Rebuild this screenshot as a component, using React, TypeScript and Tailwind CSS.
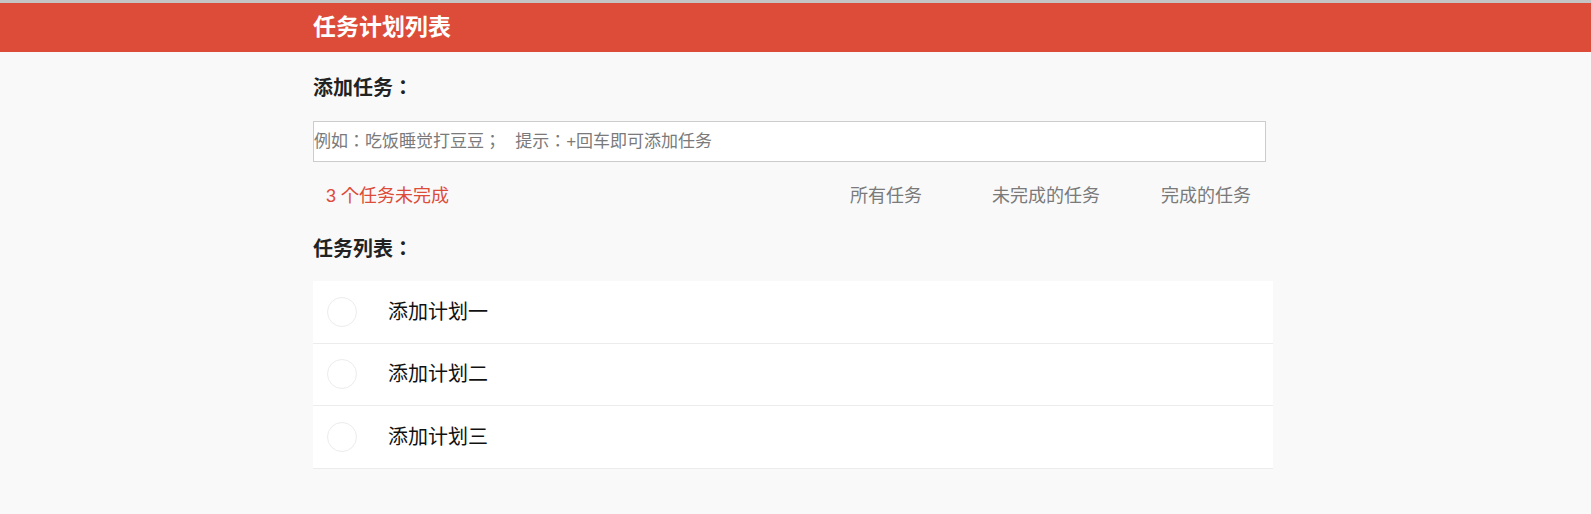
import React from "react";

const tasks = ["添加计划一", "添加计划二", "添加计划三"];

export default function App() {
  return (
    <div className="min-h-screen w-full bg-[#f9f9f9] font-['Liberation_Sans','Noto_Sans_CJK_JP',sans-serif] text-[#222]">
      <div className="border-t-[3px] border-[#c4c4c4] bg-[#dd4b39]">
        <div className="ml-[313px] flex h-[49px] w-[960px] items-center">
          <h1 className="text-[23px] font-bold text-white">任务计划列表</h1>
        </div>
      </div>
      <div className="ml-[313px] flex w-[960px] flex-col">
        <div className="mt-[21px] flex h-[30px] items-center text-[20px] font-bold text-[#222]">添加任务：</div>
        <input
          className="mt-[18px] h-[41px] w-[953px] border border-[#cccccc] bg-white px-0 text-[17px] text-[#333] outline-none placeholder:text-[#7a7a7a]"
          placeholder={"例如：吃饭睡觉打豆豆；\u00a0\u00a0\u00a0提示：+回车即可添加任务"}
        />
        <div className="mt-[20px] flex h-[28px] items-center justify-between text-[18px]">
          <span className="pl-[13px] text-[#dd4b39]">3 个任务未完成</span>
          <div className="flex items-center pr-[22px] text-[#7a7a7a]">
            <span className="mr-[70px]">所有任务</span>
            <span className="mr-[61px]">未完成的任务</span>
            <span>完成的任务</span>
          </div>
        </div>
        <div className="mt-[24px] flex h-[30px] items-center text-[20px] font-bold text-[#222]">任务列表：</div>
        <ul className="mt-[17px] flex flex-col bg-white">
          {tasks.map((t) => (
            <li key={t} className="flex h-[62.5px] items-center border-b border-[#ececec] pl-[14px]">
              <span className="h-[30px] w-[30px] rounded-full border border-[#ececec]" />
              <span className="ml-[31px] text-[20px] text-[#111]">{t}</span>
            </li>
          ))}
        </ul>
      </div>
    </div>
  );
}
